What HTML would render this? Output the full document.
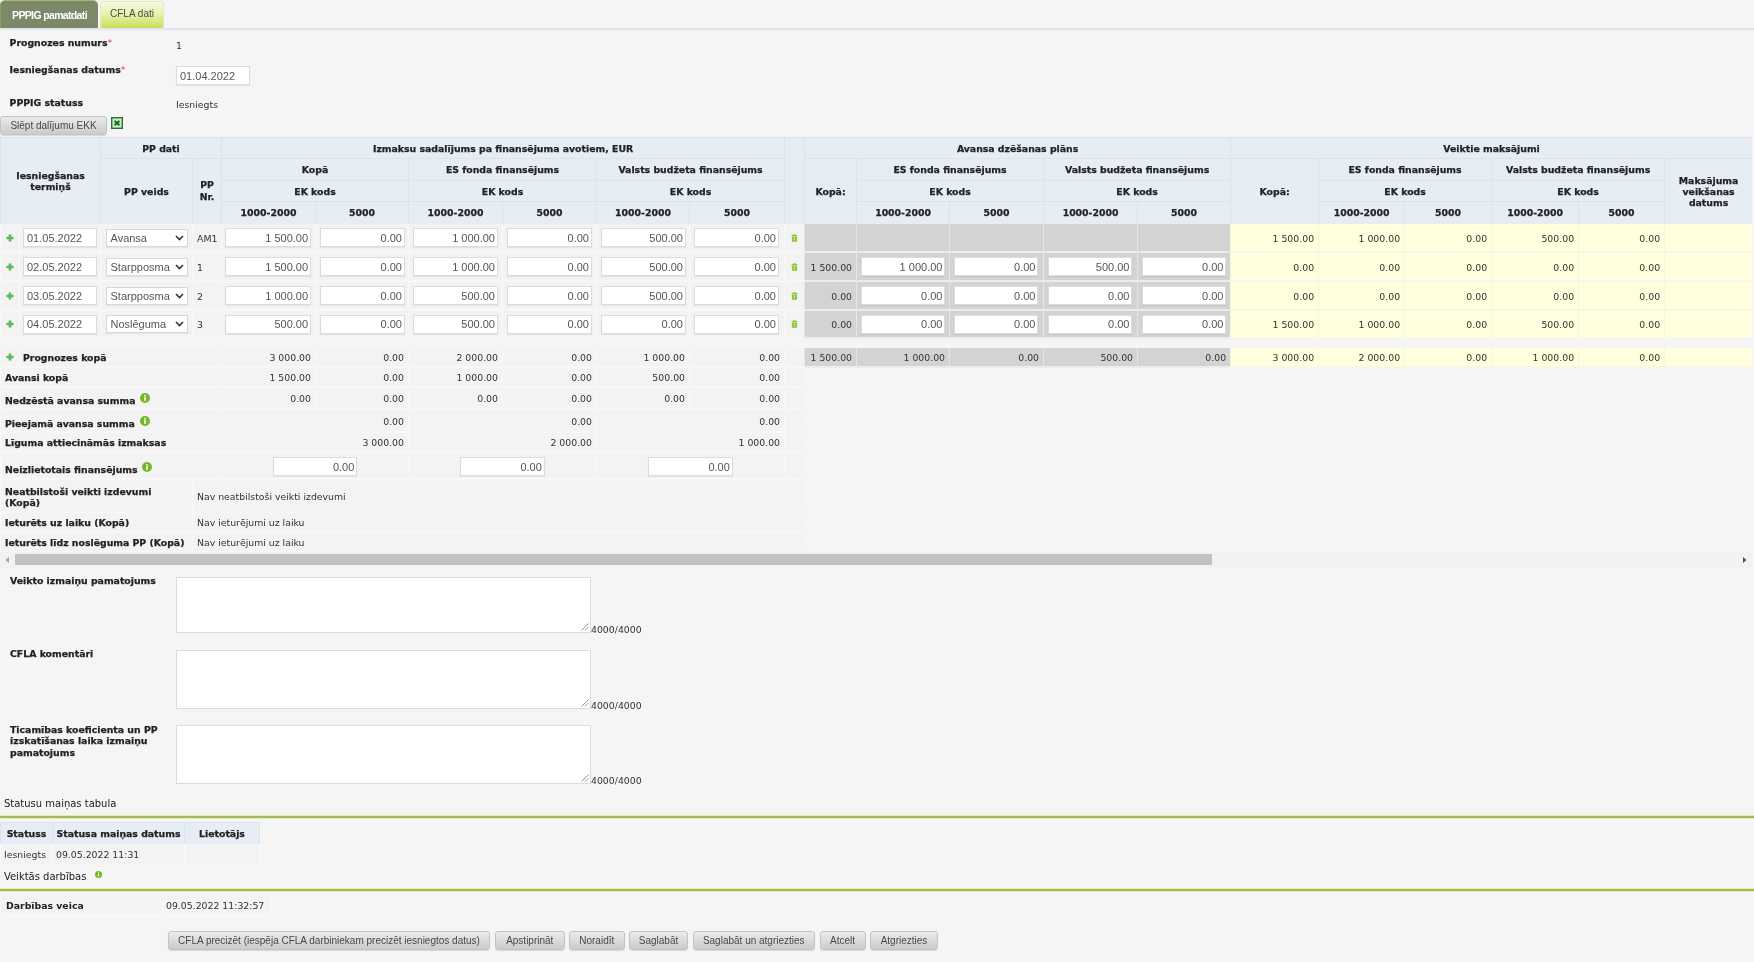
<!DOCTYPE html>
<html lang="lv"><head><meta charset="utf-8"><title>PPPIG</title>
<style>
html,body{margin:0;padding:0}
body{width:1754px;height:962px;overflow:hidden;background:#f5f5f5;color:#222;
 font-family:"DejaVu Sans","Liberation Sans",sans-serif;font-size:9.33px;position:relative}
#page{position:absolute;left:0;top:0;width:1754px;height:962px;will-change:transform}
.abs{position:absolute}
table.g th,table.s th,.lbl,table.g td.b{-webkit-text-stroke:0.25px #222}
.tabs{position:absolute;left:0;top:0;width:1754px;height:28px;border-bottom:2px solid #dde6ee;box-sizing:content-box}
.tab{position:absolute;box-sizing:border-box;font-family:"Liberation Sans",sans-serif;font-size:10px;text-align:center}
.tab.on{left:0;top:0;width:98px;height:28px;background:#7b8968;color:#fff;border-radius:5px 5px 0 0;line-height:28px;font-weight:bold;font-size:10.5px;letter-spacing:-0.65px;border-top:1px solid #a9bb72;border-left:1px solid #8f9f66}
.tab.off{left:100px;top:1px;width:64px;height:27px;border:1px solid #e3e9bd;border-bottom:none;border-radius:3px 3px 0 0;
 background:linear-gradient(#f7fae4,#e6f0a8 50%,#c8dd58);color:#4a4a4a;line-height:24px}
.lbl{position:absolute;font-weight:bold;color:#222;white-space:nowrap}
.val{position:absolute;color:#333;white-space:nowrap}
.req{color:#e23a3a;font-weight:normal;-webkit-text-stroke:0 transparent}
input,select,textarea,button{font-family:"Liberation Sans",sans-serif;margin:0}
input.txt,input.num{box-sizing:border-box;height:19px;border:1px solid #dcdcdc;background:#fff;color:#555;font-size:11px;padding:0 3px;outline:none;box-shadow:0 1px 1px rgba(0,0,0,.06)}
input.num{display:block;margin-left:4.4px;width:84.6px;text-align:right;padding-right:2px}
.btn{position:absolute;box-sizing:border-box;height:19px;border:1px solid #c4c4c4;border-radius:3px;background:linear-gradient(#ebebeb,#dbdbdb 50%,#cbcbcb);
 color:#484848;font-family:"Liberation Sans",sans-serif;font-size:10px;text-align:center;line-height:18px;white-space:nowrap;box-shadow:0 1px 1px rgba(0,0,0,.12)}
.scroll{position:absolute;left:0;top:137px;width:1752px;height:431px;overflow:hidden}
table.g{border-collapse:separate;border-spacing:0;table-layout:fixed;position:absolute;left:0;top:0}
table.g td,table.g th{box-sizing:border-box;padding:0;overflow:hidden;white-space:nowrap}
table.g th{background:#e6edf5;border-left:1px solid #d8e5ed;border-top:1px solid #d8e5ed;font-weight:bold;color:#222;text-align:center;vertical-align:middle;line-height:11px}
table.g th.nw{white-space:normal}
table.g th.p1{padding-bottom:1px}
input.num.fx{width:84.6px;margin:0 auto;display:block}
input.num.nb2{width:84px}
input.num.w1{margin-left:3.3px;width:85.8px}
svg.trash,svg.plus{display:block;margin:0 auto}
svg.plus{position:relative;left:0.3px}
table.g td{background:#f3f3f3;border-left:1px solid #f8f8f8;border-bottom:2px solid #f7f7f7;color:#333;vertical-align:middle}
table.g td{padding-top:1px}
table.g td.r{text-align:right;padding-right:4px}
table.g td.gr{background:#d3d3d3;border-left:1px solid #e6e6e6;border-bottom:2px solid #ececec}
table.g td.ye{background:#ffffdd;border-left:1px solid #f6f6e0;border-bottom:2px solid #f6f6ea}
table.g td.b{font-weight:bold;color:#222;padding-left:4px;text-align:left}
.dn{position:relative;display:inline-block}
table.g td.c{text-align:center;padding-top:0}
table.g td.sp{background:#f5f5f5;border-color:#f5f5f5}
table.g td.nb{background:#f5f5f5;border-color:#f5f5f5}
.ic{display:inline-block;vertical-align:middle}
.sel{display:inline-block;box-sizing:border-box;width:82px;height:18px;border:1px solid #d8d8d8;background:#fff;color:#555;font-family:"Liberation Sans",sans-serif;font-size:11px;line-height:15px;text-align:left;padding-left:4px;padding-top:1px;position:relative;vertical-align:middle;box-shadow:0 1px 1px rgba(0,0,0,.06)}
.sel svg{position:absolute;right:3px;top:5px}
textarea{position:absolute;box-sizing:border-box;border:1px solid #dcdcdc;background:#fff;resize:none;outline:none}
.cnt{position:absolute;color:#333;font-size:9.33px}
.h2{position:absolute;left:4px;font-family:"DejaVu Sans Condensed","DejaVu Sans",sans-serif;font-size:11.1px;color:#222;white-space:nowrap}
.gl{position:absolute;left:0;width:1754px;height:2px;background:#a6b85c;box-shadow:0 -1px 0 #e3eeb4,0 1px 0 #e3eeb4}
table.s{position:absolute;border-collapse:separate;border-spacing:0;table-layout:fixed}
table.s th{background:#e6edf5;border-left:1px solid #d6e4ec;border-top:1px solid #d6e4ec;font-weight:bold;text-align:center;padding:0;box-sizing:border-box}
table.s td{background:#f3f3f3;border-left:1px solid #f8f8f8;border-bottom:2px solid #f7f7f7;padding:1px 0 0 3px;box-sizing:border-box;color:#333}
</style></head><body>
<div id="page">

<div class="tabs"><div class="tab on">PPPIG pamatdati</div><div class="tab off">CFLA dati</div></div>
<div class="lbl" style="left:9.6px;top:37px">Prognozes numurs<span class="req">*</span></div>
<div class="val" style="left:176px;top:40px">1</div>
<div class="lbl" style="left:9.6px;top:64px">Iesniegšanas datums<span class="req">*</span></div>
<input class="txt abs" style="left:176px;top:66px;width:74px;height:19px" value="01.04.2022">
<div class="lbl" style="left:9.6px;top:97px">PPPIG statuss</div>
<div class="val" style="left:176px;top:99px">Iesniegts</div>
<div class="btn" style="left:0;top:116px;width:107px;height:19px">Slēpt dalījumu EKK</div>
<div class="abs" style="left:111px;top:117px;line-height:0"><svg class="ic xls" width="12" height="12" viewBox="0 0 12 12"><rect x="0.7" y="0.7" width="10.6" height="10.6" fill="#c6f0c6" stroke="#2f6d34" stroke-width="1.4"/><path d="M3.6 3.9L8.4 8.3M8.4 3.9L3.6 8.3" stroke="#1f6a27" stroke-width="2.1"/></svg></div>
<div class="scroll"><table class="g" style="width:1927px"><colgroup>
<col style="width:19px">
<col style="width:81px">
<col style="width:92px">
<col style="width:29px">
<col style="width:94px">
<col style="width:93px">
<col style="width:94px">
<col style="width:94px">
<col style="width:93px">
<col style="width:95px">
<col style="width:20px">
<col style="width:52px">
<col style="width:93px">
<col style="width:94px">
<col style="width:94px">
<col style="width:93px">
<col style="width:88px">
<col style="width:86px">
<col style="width:87px">
<col style="width:87px">
<col style="width:86px">
<col style="width:88px">
<col style="width:88px">
<col style="width:87px">
</colgroup>
<tr style="height:21px"><th colspan="2" rowspan="4" class="nw" style="padding:0 12px">Iesniegšanas termiņš</th><th colspan="2">PP dati</th><th colspan="6">Izmaksu sadalījums pa finansējuma avotiem, EUR</th><th rowspan="4"></th><th colspan="5">Avansa dzēšanas plāns</th><th colspan="6">Veiktie maksājumi</th><th colspan="2"></th></tr>
<tr style="height:22px"><th rowspan="3">PP veids</th><th rowspan="3" class="nw" style="line-height:11.5px;padding-bottom:2px">PP Nr.</th><th colspan="2">Kopā</th><th colspan="2">ES fonda finansējums</th><th colspan="2">Valsts budžeta finansējums</th><th rowspan="3">Kopā:</th><th colspan="2">ES fonda finansējums</th><th colspan="2">Valsts budžeta finansējums</th><th rowspan="3">Kopā:</th><th colspan="2">ES fonda finansējums</th><th colspan="2">Valsts budžeta finansējums</th><th rowspan="3" class="nw" style="padding:0 10px">Maksājuma veikšanas datums</th><th rowspan="3"></th><th rowspan="3"></th></tr>
<tr style="height:21px"><th colspan="2">EK kods</th><th colspan="2">EK kods</th><th colspan="2">EK kods</th><th colspan="2">EK kods</th><th colspan="2">EK kods</th><th colspan="2">EK kods</th><th colspan="2">EK kods</th></tr>
<tr style="height:23px"><th class="p1">1000-2000</th><th class="p1">5000</th><th class="p1">1000-2000</th><th class="p1">5000</th><th class="p1">1000-2000</th><th class="p1">5000</th><th class="p1">1000-2000</th><th class="p1">5000</th><th class="p1">1000-2000</th><th class="p1">5000</th><th class="p1">1000-2000</th><th class="p1">5000</th><th class="p1">1000-2000</th><th class="p1">5000</th></tr>
<tr style="height:29px"><td class="c"><svg class="ic plus" width="8" height="8" viewBox="0 0 9 9"><path d="M3 0.5h3v2.5h2.5v3H6v2.5H3V6H0.5V3H3z" fill="#5cb85c"/></svg></td><td class="c"><input class="txt" style="width:74px" value="01.05.2022"></td>
<td class="c"><span class="sel">Avansa<svg width="9" height="6" viewBox="0 0 9 6"><path d="M1 1l3.5 3.5L8 1" fill="none" stroke="#333" stroke-width="1.6"/></svg></span></td><td style="padding-left:4px">AM1</td>
<td class="c"><input class="num w1" value="1 500.00"></td>
<td class="c"><input class="num " value="0.00"></td>
<td class="c"><input class="num " value="1 000.00"></td>
<td class="c"><input class="num " value="0.00"></td>
<td class="c"><input class="num " value="500.00"></td>
<td class="c"><input class="num " value="0.00"></td>
<td class="c"><svg class="ic trash" width="7" height="8" viewBox="0 0 8 9"><path d="M2.6 0.3h2.8v0.9H7.4v1.1H0.6V1.2h2zM1 2.9h6v5.2q0 .7-.7.7H1.7q-.7 0-.7-.7z" fill="#8dc63f"/><rect x="3.3" y="4" width="1.4" height="3.2" fill="#c6e48b"/></svg></td>
<td class="gr"></td><td class="gr"></td><td class="gr"></td><td class="gr"></td><td class="gr"></td>
<td class="ye r">1 500.00</td>
<td class="ye r">1 000.00</td>
<td class="ye r">0.00</td>
<td class="ye r">500.00</td>
<td class="ye r">0.00</td>
<td class="ye"></td><td class="ye"></td><td class="ye"></td></tr>
<tr style="height:29px"><td class="c"><svg class="ic plus" width="8" height="8" viewBox="0 0 9 9"><path d="M3 0.5h3v2.5h2.5v3H6v2.5H3V6H0.5V3H3z" fill="#5cb85c"/></svg></td><td class="c"><input class="txt" style="width:74px" value="02.05.2022"></td>
<td class="c"><span class="sel">Starpposma<svg width="9" height="6" viewBox="0 0 9 6"><path d="M1 1l3.5 3.5L8 1" fill="none" stroke="#333" stroke-width="1.6"/></svg></span></td><td style="padding-left:4px">1</td>
<td class="c"><input class="num w1" value="1 500.00"></td>
<td class="c"><input class="num " value="0.00"></td>
<td class="c"><input class="num " value="1 000.00"></td>
<td class="c"><input class="num " value="0.00"></td>
<td class="c"><input class="num " value="500.00"></td>
<td class="c"><input class="num " value="0.00"></td>
<td class="c"><svg class="ic trash" width="7" height="8" viewBox="0 0 8 9"><path d="M2.6 0.3h2.8v0.9H7.4v1.1H0.6V1.2h2zM1 2.9h6v5.2q0 .7-.7.7H1.7q-.7 0-.7-.7z" fill="#8dc63f"/><rect x="3.3" y="4" width="1.4" height="3.2" fill="#c6e48b"/></svg></td>
<td class="gr r">1 500.00</td>
<td class="gr c"><input class="num nb2" value="1 000.00"></td>
<td class="gr c"><input class="num nb2" value="0.00"></td>
<td class="gr c"><input class="num nb2" value="500.00"></td>
<td class="gr c"><input class="num nb2" value="0.00"></td>
<td class="ye r">0.00</td>
<td class="ye r">0.00</td>
<td class="ye r">0.00</td>
<td class="ye r">0.00</td>
<td class="ye r">0.00</td>
<td class="ye"></td><td class="ye"></td><td class="ye"></td></tr>
<tr style="height:29px"><td class="c"><svg class="ic plus" width="8" height="8" viewBox="0 0 9 9"><path d="M3 0.5h3v2.5h2.5v3H6v2.5H3V6H0.5V3H3z" fill="#5cb85c"/></svg></td><td class="c"><input class="txt" style="width:74px" value="03.05.2022"></td>
<td class="c"><span class="sel">Starpposma<svg width="9" height="6" viewBox="0 0 9 6"><path d="M1 1l3.5 3.5L8 1" fill="none" stroke="#333" stroke-width="1.6"/></svg></span></td><td style="padding-left:4px">2</td>
<td class="c"><input class="num w1" value="1 000.00"></td>
<td class="c"><input class="num " value="0.00"></td>
<td class="c"><input class="num " value="500.00"></td>
<td class="c"><input class="num " value="0.00"></td>
<td class="c"><input class="num " value="500.00"></td>
<td class="c"><input class="num " value="0.00"></td>
<td class="c"><svg class="ic trash" width="7" height="8" viewBox="0 0 8 9"><path d="M2.6 0.3h2.8v0.9H7.4v1.1H0.6V1.2h2zM1 2.9h6v5.2q0 .7-.7.7H1.7q-.7 0-.7-.7z" fill="#8dc63f"/><rect x="3.3" y="4" width="1.4" height="3.2" fill="#c6e48b"/></svg></td>
<td class="gr r">0.00</td>
<td class="gr c"><input class="num nb2" value="0.00"></td>
<td class="gr c"><input class="num nb2" value="0.00"></td>
<td class="gr c"><input class="num nb2" value="0.00"></td>
<td class="gr c"><input class="num nb2" value="0.00"></td>
<td class="ye r">0.00</td>
<td class="ye r">0.00</td>
<td class="ye r">0.00</td>
<td class="ye r">0.00</td>
<td class="ye r">0.00</td>
<td class="ye"></td><td class="ye"></td><td class="ye"></td></tr>
<tr style="height:28px"><td class="c"><svg class="ic plus" width="8" height="8" viewBox="0 0 9 9"><path d="M3 0.5h3v2.5h2.5v3H6v2.5H3V6H0.5V3H3z" fill="#5cb85c"/></svg></td><td class="c"><input class="txt" style="width:74px" value="04.05.2022"></td>
<td class="c"><span class="sel">Noslēguma<svg width="9" height="6" viewBox="0 0 9 6"><path d="M1 1l3.5 3.5L8 1" fill="none" stroke="#333" stroke-width="1.6"/></svg></span></td><td style="padding-left:4px">3</td>
<td class="c"><input class="num w1" value="500.00"></td>
<td class="c"><input class="num " value="0.00"></td>
<td class="c"><input class="num " value="500.00"></td>
<td class="c"><input class="num " value="0.00"></td>
<td class="c"><input class="num " value="0.00"></td>
<td class="c"><input class="num " value="0.00"></td>
<td class="c"><svg class="ic trash" width="7" height="8" viewBox="0 0 8 9"><path d="M2.6 0.3h2.8v0.9H7.4v1.1H0.6V1.2h2zM1 2.9h6v5.2q0 .7-.7.7H1.7q-.7 0-.7-.7z" fill="#8dc63f"/><rect x="3.3" y="4" width="1.4" height="3.2" fill="#c6e48b"/></svg></td>
<td class="gr r">0.00</td>
<td class="gr c"><input class="num nb2" value="0.00"></td>
<td class="gr c"><input class="num nb2" value="0.00"></td>
<td class="gr c"><input class="num nb2" value="0.00"></td>
<td class="gr c"><input class="num nb2" value="0.00"></td>
<td class="ye r">1 500.00</td>
<td class="ye r">1 000.00</td>
<td class="ye r">0.00</td>
<td class="ye r">500.00</td>
<td class="ye r">0.00</td>
<td class="ye"></td><td class="ye"></td><td class="ye"></td></tr>
<tr style="height:9px"><td class="sp" colspan="24"></td></tr>
<tr style="height:20px"><td class="c"><svg class="ic plus" width="8" height="8" viewBox="0 0 9 9"><path d="M3 0.5h3v2.5h2.5v3H6v2.5H3V6H0.5V3H3z" fill="#5cb85c"/></svg></td><td class="b" colspan="3" style="padding-left:3px">Prognozes kopā</td><td class="r">3 000.00</td><td class="r">0.00</td><td class="r">2 000.00</td><td class="r">0.00</td><td class="r">1 000.00</td><td class="r">0.00</td><td></td><td class="gr r">1 500.00</td><td class="gr r">1 000.00</td><td class="gr r">0.00</td><td class="gr r">500.00</td><td class="gr r">0.00</td><td class="ye r">3 000.00</td><td class="ye r">2 000.00</td><td class="ye r">0.00</td><td class="ye r">1 000.00</td><td class="ye r">0.00</td><td class="ye"></td><td class="ye"></td><td class="ye"></td></tr>
<tr style="height:20px"><td class="b" colspan="4"><span class="dn" style="top:0px">Avansi kopā</span></td><td class="r">1 500.00</td><td class="r">0.00</td><td class="r">1 000.00</td><td class="r">0.00</td><td class="r">500.00</td><td class="r">0.00</td><td></td><td class="nb" colspan="13"></td></tr>
<tr style="height:22px"><td class="b" colspan="4"><span class="dn" style="top:2px">Nedzēstā avansa summa <span style="position:relative;top:-3px;margin-left:1.5px"><svg class="ic info" width="10" height="10" viewBox="0 0 10 10"><circle cx="5" cy="5" r="5" fill="#76b72a"/><rect x="4.2" y="4" width="1.6" height="3.8" fill="#fff"/><rect x="4.2" y="1.9" width="1.6" height="1.5" fill="#fff"/></svg></span></span></td><td class="r">0.00</td><td class="r">0.00</td><td class="r">0.00</td><td class="r">0.00</td><td class="r">0.00</td><td class="r">0.00</td><td></td><td class="nb" colspan="13"></td></tr>
<tr style="height:23px"><td class="b" colspan="4"><span class="dn" style="top:2.5px">Pieejamā avansa summa <span style="position:relative;top:-3px;margin-left:1.5px"><svg class="ic info" width="10" height="10" viewBox="0 0 10 10"><circle cx="5" cy="5" r="5" fill="#76b72a"/><rect x="4.2" y="4" width="1.6" height="3.8" fill="#fff"/><rect x="4.2" y="1.9" width="1.6" height="1.5" fill="#fff"/></svg></span></span></td><td class="r" colspan="2">0.00</td><td class="r" colspan="2">0.00</td><td class="r" colspan="2">0.00</td><td></td><td class="nb" colspan="13"></td></tr>
<tr style="height:20px"><td class="b" colspan="4"><span class="dn" style="top:0px">Līguma attiecināmās izmaksas</span></td><td class="r" colspan="2">3 000.00</td><td class="r" colspan="2">2 000.00</td><td class="r" colspan="2">1 000.00</td><td></td><td class="nb" colspan="13"></td></tr>
<tr style="height:27px"><td class="b" colspan="4"><span class="dn" style="top:3.5px">Neizlietotais finansējums <span style="position:relative;top:-3px;margin-left:1.5px"><svg class="ic info" width="10" height="10" viewBox="0 0 10 10"><circle cx="5" cy="5" r="5" fill="#76b72a"/><rect x="4.2" y="4" width="1.6" height="3.8" fill="#fff"/><rect x="4.2" y="1.9" width="1.6" height="1.5" fill="#fff"/></svg></span></span></td><td class="c" colspan="2" style="padding-top:2px"><input class="num fx" value="0.00"></td><td class="c" colspan="2" style="padding-top:2px"><input class="num fx" value="0.00"></td><td class="c" colspan="2" style="padding-top:2px"><input class="num fx" value="0.00"></td><td></td><td class="nb" colspan="13"></td></tr>
<tr style="height:33px"><td class="b" colspan="3" style="white-space:normal;line-height:11.3px;padding-top:3px">Neatbilstoši veikti izdevumi<br>(Kopā)</td><td colspan="8" style="padding-left:4px">Nav neatbilstoši veikti izdevumi</td><td class="nb" colspan="13"></td></tr>
<tr style="height:20px"><td class="b" colspan="3" style="">Ieturēts uz laiku (Kopā)</td><td colspan="8" style="padding-left:4px">Nav ieturējumi uz laiku</td><td class="nb" colspan="13"></td></tr>
<tr style="height:20px"><td class="b" colspan="3" style="">Ieturēts līdz noslēguma PP (Kopā)</td><td colspan="8" style="padding-left:4px">Nav ieturējumi uz laiku</td><td class="nb" colspan="13"></td></tr>
</table>
<div class="abs" style="left:0;top:415px;width:1752px;height:16px;background:#f2f2f2"></div>
<div class="abs" style="left:15px;top:417px;width:1197px;height:11px;background:#c1c1c1"></div>
<svg class="abs" style="left:5px;top:420px" width="4" height="6" viewBox="0 0 4 6"><path d="M4 0v6L0.5 3z" fill="#a3a3a3"/></svg>
<svg class="abs" style="left:1743px;top:420px" width="4" height="6" viewBox="0 0 4 6"><path d="M0 0v6L3.5 3z" fill="#505050"/></svg>
</div>
<div class="lbl" style="left:10px;top:575px;white-space:normal;width:160px;line-height:11.3px">Veikto izmaiņu pamatojums</div>
<textarea style="left:176px;top:577px;width:415px;height:56px"></textarea>
<div class="abs" style="left:581px;top:623px;line-height:0"><svg width="8" height="8" viewBox="0 0 8 8"><path d="M7.5 0.5L0.5 7.5M7.5 4L4 7.5" stroke="#888" stroke-width="0.9" fill="none"/></svg></div>
<div class="cnt" style="left:591px;top:624px">4000/4000</div>
<div class="lbl" style="left:10px;top:648px;white-space:normal;width:160px;line-height:11.3px">CFLA komentāri</div>
<textarea style="left:176px;top:650px;width:415px;height:59px"></textarea>
<div class="abs" style="left:581px;top:699px;line-height:0"><svg width="8" height="8" viewBox="0 0 8 8"><path d="M7.5 0.5L0.5 7.5M7.5 4L4 7.5" stroke="#888" stroke-width="0.9" fill="none"/></svg></div>
<div class="cnt" style="left:591px;top:700px">4000/4000</div>
<div class="lbl" style="left:10px;top:724px;white-space:normal;width:160px;line-height:11.3px">Ticamības koeficienta un PP izskatīšanas laika izmaiņu pamatojums</div>
<textarea style="left:176px;top:725px;width:415px;height:59px"></textarea>
<div class="abs" style="left:581px;top:774px;line-height:0"><svg width="8" height="8" viewBox="0 0 8 8"><path d="M7.5 0.5L0.5 7.5M7.5 4L4 7.5" stroke="#888" stroke-width="0.9" fill="none"/></svg></div>
<div class="cnt" style="left:591px;top:775px">4000/4000</div>
<div class="h2" style="top:797px">Statusu maiņas tabula</div>
<div class="gl" style="top:816px"></div>
<table class="s" style="left:0;top:822px;width:260px"><colgroup><col style="width:52px"><col style="width:132px"><col style="width:75px"><col style="width:1px"></colgroup><tr style="height:22px"><th>Statuss</th><th>Statusa maiņas datums</th><th>Lietotājs</th><th style="background:none;border-top:none"></th></tr><tr style="height:22px"><td>Iesniegts</td><td>09.05.2022 11:31</td><td></td><td style="background:none;border:none;border-left:1px solid #f8f8f8;padding:0"></td></tr></table>
<div class="h2" style="top:870px">Veiktās darbības <span style="position:absolute;left:91px;top:1px;line-height:0"><svg class="ic info" width="7" height="7" viewBox="0 0 10 10"><circle cx="5" cy="5" r="5" fill="#76b72a"/><rect x="4.2" y="4" width="1.6" height="3.8" fill="#fff"/><rect x="4.2" y="1.9" width="1.6" height="1.5" fill="#fff"/></svg></span></div>
<div class="gl" style="top:889px"></div>
<table class="s" style="left:0;top:895px;width:272px"><colgroup><col style="width:162px"><col style="width:109px"><col style="width:1px"></colgroup><tr style="height:21px"><td style="font-weight:bold;color:#222;padding-left:5px">Darbības veica</td><td style="padding-left:3px">09.05.2022 11:32:57</td><td style="background:none;border:none;border-left:1px solid #f8f8f8;padding:0"></td></tr></table>
<div class="btn" style="left:168px;top:931px;width:322px">CFLA precizēt (iespēja CFLA darbiniekam precizēt iesniegtos datus)</div>
<div class="btn" style="left:495px;top:931px;width:69.5px">Apstiprināt</div>
<div class="btn" style="left:569px;top:931px;width:55.5px">Noraidīt</div>
<div class="btn" style="left:629px;top:931px;width:59px">Saglabāt</div>
<div class="btn" style="left:693px;top:931px;width:121.5px">Saglabāt un atgriezties</div>
<div class="btn" style="left:819.5px;top:931px;width:46.0px">Atcelt</div>
<div class="btn" style="left:870px;top:931px;width:68px">Atgriezties</div>
</div>
</body></html>
